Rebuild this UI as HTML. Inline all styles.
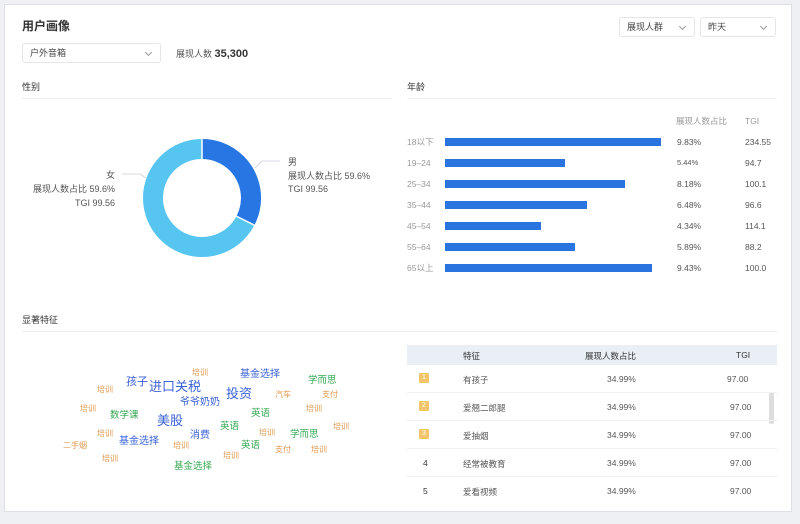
<!DOCTYPE html>
<html><head><meta charset="utf-8"><style>
*{margin:0;padding:0;box-sizing:border-box}
body{width:800px;height:524px;background:#eef0f3;font-family:"Liberation Sans","Noto Sans CJK SC",sans-serif;position:relative;overflow:hidden;color:#333}
.card{position:absolute;left:4px;top:4px;width:788px;height:508px;background:#fff;border:1px solid #dcdfe4}
.a{position:absolute;white-space:nowrap}
.sel{position:absolute;border:1px solid #e4e6ea;border-radius:3px;height:20px;font-size:9px;color:#444;line-height:18px;padding-left:7px}
.sel:after{content:"";position:absolute;right:9px;top:6px;width:4px;height:4px;border-right:1px solid #999;border-bottom:1px solid #999;transform:rotate(45deg)}
.h{font-size:9px;color:#333}
.line{position:absolute;height:1px;background:#eef0f2}
.lab{font-size:8.5px;color:#999;line-height:1}
.bar{position:absolute;height:8px;background:#2a74e0;left:445px}
.v{font-size:8.5px;color:#555;line-height:1}
.w{position:absolute;white-space:nowrap;line-height:1}
.o{color:#e0994f;font-size:8px}.g{color:#35a852;font-size:9.5px}.b{color:#3a62d6;font-size:10px}
.row{position:absolute;left:407px;width:370px;height:28px;border-bottom:1px solid #f0f1f3;font-size:8.5px;color:#555}
.row span{position:absolute;top:9px}
.badge{position:absolute;left:12px;top:8px;width:10px;height:10px;background:#f2c56a;color:#fff;font-size:7px;text-align:center;line-height:10px;border-radius:1px}
</style></head><body>
<div class="card"></div>
<div class="a" style="left:22px;top:17px;font-size:12px;font-weight:bold;color:#333">用户画像</div>
<div class="sel" style="left:22px;top:43px;width:139px">户外音箱</div>
<div class="a" style="left:176px;top:47px;font-size:9px;color:#555">展现人数 <b style="font-size:11px;color:#333">35,300</b></div>
<div class="sel" style="left:619px;top:17px;width:76px">展现人群</div>
<div class="sel" style="left:700px;top:17px;width:76px">昨天</div>

<div class="a h" style="left:22px;top:80px">性别</div>
<div class="line" style="left:22px;top:98px;width:370px"></div>
<div class="a h" style="left:407px;top:80px">年龄</div>
<div class="line" style="left:407px;top:98px;width:370px"></div>

<svg class="a" style="left:0;top:0" width="400" height="300">
<circle cx="202" cy="198" r="49" fill="none" stroke="#56c5f0" stroke-width="20"/>
<circle cx="202" cy="198" r="49" fill="none" stroke="#2876e3" stroke-width="20" stroke-dasharray="100 400" transform="rotate(-90 202 198)"/>
<line x1="202" y1="138" x2="202" y2="159" stroke="#fff" stroke-width="1.5"/>
<line x1="236" y1="216" x2="256" y2="226" stroke="#fff" stroke-width="1.5"/>
<polyline points="255,168 262,161 280,161" fill="none" stroke="#ccd" stroke-width="0.8"/>
<polyline points="122,174 140,174 146,178" fill="none" stroke="#ccd" stroke-width="0.8"/>
</svg>
<div class="a" style="left:288px;top:156px;font-size:9px;color:#555;line-height:13.5px">男<br>展现人数占比 59.6%<br>TGI 99.56</div>
<div class="a" style="left:30px;top:168px;font-size:9px;color:#555;line-height:14px;text-align:right;width:85px">女<br>展现人数占比 59.6%<br>TGI 99.56</div>

<div class="a lab" style="left:676px;top:117px">展现人数占比</div>
<div class="a lab" style="left:745px;top:117px">TGI</div>
<div class="a lab" style="left:407px;top:138px">18以下</div><div class="bar" style="top:138px;width:216px"></div><div class="a v" style="left:677px;top:138px">9.83%</div><div class="a v" style="left:745px;top:138px">234.55</div>
<div class="a lab" style="left:407px;top:159px">19–24</div><div class="bar" style="top:159px;width:120px"></div><div class="a v" style="left:677px;top:159px;font-size:7.5px">5.44%</div><div class="a v" style="left:745px;top:159px">94.7</div>
<div class="a lab" style="left:407px;top:180px">25–34</div><div class="bar" style="top:180px;width:180px"></div><div class="a v" style="left:677px;top:180px">8.18%</div><div class="a v" style="left:745px;top:180px">100.1</div>
<div class="a lab" style="left:407px;top:201px">35–44</div><div class="bar" style="top:201px;width:142px"></div><div class="a v" style="left:677px;top:201px">6.48%</div><div class="a v" style="left:745px;top:201px">96.6</div>
<div class="a lab" style="left:407px;top:222px">45–54</div><div class="bar" style="top:222px;width:96px"></div><div class="a v" style="left:677px;top:222px">4.34%</div><div class="a v" style="left:745px;top:222px">114.1</div>
<div class="a lab" style="left:407px;top:243px">55–64</div><div class="bar" style="top:243px;width:130px"></div><div class="a v" style="left:677px;top:243px">5.89%</div><div class="a v" style="left:745px;top:243px">88.2</div>
<div class="a lab" style="left:407px;top:264px">65以上</div><div class="bar" style="top:264px;width:207px"></div><div class="a v" style="left:677px;top:264px">9.43%</div><div class="a v" style="left:745px;top:264px">100.0</div>

<div class="a h" style="left:22px;top:313px">显著特征</div>
<div class="line" style="left:22px;top:331px;width:755px"></div>

<div class="w o" style="left:192px;top:369px">培训</div>
<div class="w b" style="left:240px;top:370px">基金选择</div>
<div class="w g" style="left:308px;top:376px">学而思</div>
<div class="w b" style="left:126px;top:377px;font-size:11px">孩子</div>
<div class="w b" style="left:149px;top:380px;font-size:13px">进口关税</div>
<div class="w o" style="left:97px;top:386px">培训</div>
<div class="w b" style="left:226px;top:387px;font-size:13px">投资</div>
<div class="w o" style="left:275px;top:391px">汽车</div>
<div class="w o" style="left:322px;top:391px">支付</div>
<div class="w b" style="left:180px;top:398px">爷爷奶奶</div>
<div class="w o" style="left:80px;top:405px">培训</div>
<div class="w o" style="left:306px;top:405px">培训</div>
<div class="w g" style="left:110px;top:411px">数学课</div>
<div class="w g" style="left:251px;top:409px">英语</div>
<div class="w b" style="left:157px;top:414px;font-size:13px">美股</div>
<div class="w g" style="left:220px;top:422px">英语</div>
<div class="w o" style="left:333px;top:423px">培训</div>
<div class="w o" style="left:97px;top:430px">培训</div>
<div class="w o" style="left:259px;top:429px">培训</div>
<div class="w g" style="left:290px;top:430px">学而思</div>
<div class="w b" style="left:190px;top:431px">消费</div>
<div class="w b" style="left:119px;top:437px">基金选择</div>
<div class="w o" style="left:63px;top:442px">二手烟</div>
<div class="w o" style="left:173px;top:442px">培训</div>
<div class="w g" style="left:241px;top:441px">英语</div>
<div class="w o" style="left:275px;top:446px">支付</div>
<div class="w o" style="left:311px;top:446px">培训</div>
<div class="w o" style="left:223px;top:452px">培训</div>
<div class="w o" style="left:102px;top:455px">培训</div>
<div class="w g" style="left:174px;top:462px">基金选择</div>

<div class="a" style="left:407px;top:345px;width:370px;height:20px;background:#eaeef5"></div>
<div class="a" style="left:463px;top:350px;font-size:8.5px;color:#333">特征</div>
<div class="a" style="left:585px;top:350px;font-size:8.5px;color:#333">展现人数占比</div>
<div class="a" style="left:736px;top:350px;font-size:8.5px;color:#333">TGI</div>
<div class="a" style="left:769px;top:392px;width:5px;height:32px;background:#ddd;border-radius:2px"></div>
<div class="row" style="top:365px"><div class="badge">1</div><span style="left:56px">有孩子</span><span style="left:200px">34.99%</span><span style="left:320px">97.00</span></div>
<div class="row" style="top:393px"><div class="badge">2</div><span style="left:56px">爱翘二郎腿</span><span style="left:200px">34.99%</span><span style="left:323px">97.00</span></div>
<div class="row" style="top:421px"><div class="badge">3</div><span style="left:56px">爱抽烟</span><span style="left:200px">34.99%</span><span style="left:323px">97.00</span></div>
<div class="row" style="top:449px"><span style="left:16px;color:#333">4</span><span style="left:56px">经常被教育</span><span style="left:200px">34.99%</span><span style="left:323px">97.00</span></div>
<div class="row" style="top:477px;border:none"><span style="left:16px;color:#333">5</span><span style="left:56px">爱看视频</span><span style="left:200px">34.99%</span><span style="left:323px">97.00</span></div>
</body></html>
